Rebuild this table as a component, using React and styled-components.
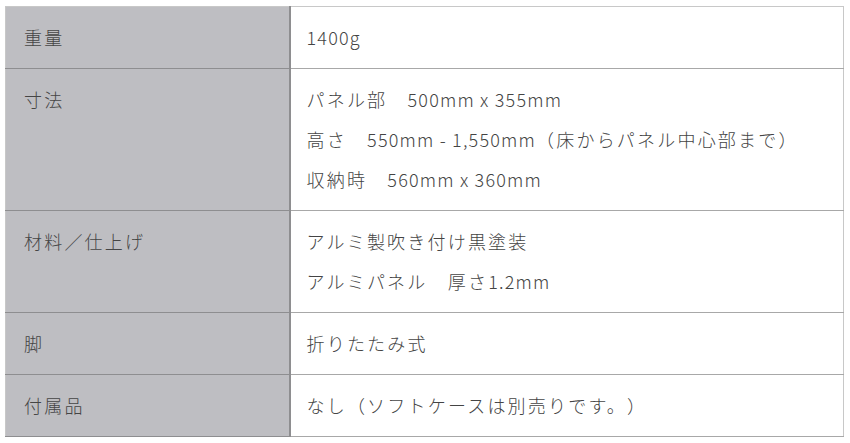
import React from "react";
import styled, { createGlobalStyle } from "styled-components";

const GlobalStyle = createGlobalStyle`
  html, body {
    margin: 0;
    padding: 0;
    background: #ffffff;
  }
  body {
    font-family: "Noto Sans CJK JP", "Noto Sans", sans-serif;
    color: #444;
  }
`;

const specs = [
  { label: "重量", lines: ["1400g"] },
  {
    label: "寸法",
    lines: [
      "パネル部　500mm x 355mm",
      "高さ　550mm - 1,550mm（床からパネル中心部まで）",
      "収納時　560mm x 360mm",
    ],
  },
  {
    label: "材料／仕上げ",
    lines: ["アルミ製吹き付け黒塗装", "アルミパネル　厚さ1.2mm"],
  },
  { label: "脚", lines: ["折りたたみ式"] },
  { label: "付属品", lines: ["なし（ソフトケースは別売りです。）"] },
];

const Wrapper = styled.div`
  padding: 6px 6px 0 5px;
`;

const Table = styled.table`
  width: 839px;
  border-collapse: collapse;
  border: 1px solid #c8c8c8;
  font-size: 18px;
  font-weight: 300;
  letter-spacing: 2.2px;
  text-spacing-trim: space-all;
`;

const Head = styled.th`
  width: 284px;
  box-sizing: border-box;
  background: #bebec2;
  border-right: 2px solid #8e8e90;
  border-bottom: 1px solid #8e8e90;
  padding: 10px 18px 11px;
  text-align: left;
  vertical-align: top;
  font-weight: 300;
  line-height: 40px;
  color: #454545;
`;

const Cell = styled.td`
  border-bottom: 1px solid #a8a8a8;
  padding: 10px 16px 11px;
  vertical-align: top;
  line-height: 40px;
  color: #444;
`;

const Line = styled.div`
  white-space: nowrap;
`;

const Latin = styled.span`
  letter-spacing: 1.2px;
`;

const renderLine = (text) =>
  text.split(/([\x20-\x7e]+)/).map((part, i) =>
    /^[\x20-\x7e]+$/.test(part) ? <Latin key={i}>{part}</Latin> : part
  );

export default function App() {
  return (
    <>
      <GlobalStyle />
      <Wrapper>
        <Table>
          <tbody>
            {specs.map((row) => (
              <tr key={row.label}>
                <Head>{row.label}</Head>
                <Cell>
                  {row.lines.map((line) => (
                    <Line key={line}>{renderLine(line)}</Line>
                  ))}
                </Cell>
              </tr>
            ))}
          </tbody>
        </Table>
      </Wrapper>
    </>
  );
}
